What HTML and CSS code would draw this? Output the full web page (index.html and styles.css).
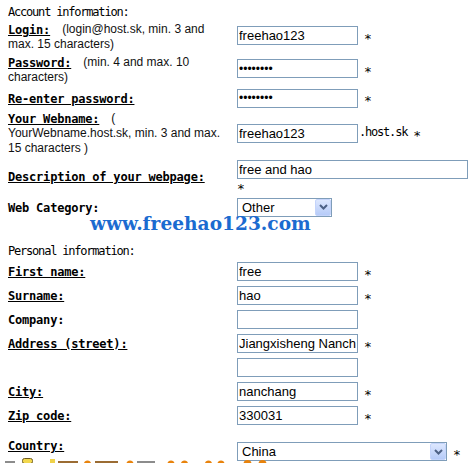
FILE: index.html
```html
<!DOCTYPE html>
<html>
<head>
<meta charset="utf-8">
<title>Registration</title>
<link rel="stylesheet" href="styles.css">
</head>
<body>
<form class="reg">
  <div class="title title-acct">Account information:</div>
  <div class="grid acct">
    <div class="lab"><u class="key">Login:</u><span class="hint">(login@host.sk, min. 3 and max. 15 characters)</span></div>
    <div class="fld up"><input class="txt" type="text" value="freehao123"><span class="req">*</span></div>

    <div class="lab"><u class="key">Password:</u><span class="hint">(min. 4 and max. 10 characters)</span></div>
    <div class="fld up"><input class="txt pw" type="password" value="12345678"><span class="req">*</span></div>

    <div class="lab"><u class="key">Re-enter password:</u></div>
    <div class="fld"><input class="txt pw" type="password" value="12345678"><span class="req">*</span></div>

    <div class="lab"><u class="key">Your Webname:</u><span class="hint">( YourWebname.host.sk, min. 3 and max. 15 characters )</span></div>
    <div class="fld"><input class="txt" type="text" value="freehao123"><span class="suffix">.host.sk <span class="star">*</span></span></div>

    <div class="lab"><u class="key">Description of your webpage:</u></div>
    <div class="fld col"><input class="txt wide" type="text" value="free and hao"><span class="req-line">*</span></div>

    <div class="lab"><b class="key plain">Web Category:</b></div>
    <div class="fld">
      <span class="selwrap cat">
        <select class="sel"><option>Other</option></select>
        <span class="sel-btn"><svg width="9" height="6" viewBox="0 0 9 6"><polyline points="1,1 4.5,4.5 8,1" fill="none" stroke="#4d6185" stroke-width="2"/></svg></span>
      </span>
    </div>
  </div>

  <div class="title title-pers">Personal information:</div>
  <div class="grid pers">
    <div class="lab"><u class="key">First name:</u></div>
    <div class="fld"><input class="txt" type="text" value="free"><span class="req">*</span></div>

    <div class="lab"><u class="key">Surname:</u></div>
    <div class="fld"><input class="txt" type="text" value="hao"><span class="req">*</span></div>

    <div class="lab"><b class="key plain">Company:</b></div>
    <div class="fld"><input class="txt" type="text" value=""></div>

    <div class="lab"><u class="key">Address (street):</u></div>
    <div class="fld"><input class="txt" type="text" value="Jiangxisheng Nanchang"><span class="req">*</span></div>

    <div class="lab"></div>
    <div class="fld"><input class="txt" type="text" value=""></div>

    <div class="lab"><u class="key">City:</u></div>
    <div class="fld"><input class="txt" type="text" value="nanchang"><span class="req">*</span></div>

    <div class="lab"><u class="key">Zip code:</u></div>
    <div class="fld"><input class="txt" type="text" value="330031"><span class="req">*</span></div>

    <div class="lab"><u class="key">Country:</u></div>
    <div class="fld country">
      <span class="selwrap ctry">
        <select class="sel"><option>China</option></select>
        <span class="sel-btn"><svg width="9" height="6" viewBox="0 0 9 6"><polyline points="1,1 4.5,4.5 8,1" fill="none" stroke="#4d6185" stroke-width="2"/></svg></span>
      </span>
      <span class="req">*</span>
    </div>
  </div>
</form>

<div class="watermark">www.freehao123.com</div>

<svg class="deco" width="471" height="8" viewBox="0 0 471 8" aria-hidden="true">
  <rect x="5" y="6" width="10" height="2" fill="#8c8c8c"/>
  <rect x="22.5" y="3.5" width="10" height="5" rx="2" fill="#f2d84e" stroke="#6e5a22"/>
  <rect x="50" y="4" width="5" height="4" fill="#efd24a"/>
  <rect x="58" y="6" width="20" height="2" fill="#9b6c33"/>
  <circle cx="87.5" cy="9" r="3.5" fill="#e8830c"/>
  <rect x="95" y="6" width="23" height="2" fill="#9b6c33"/>
  <circle cx="130" cy="9" r="3.5" fill="#e8830c"/>
  <rect x="137" y="6" width="18" height="2" fill="#8c8c8c"/>
  <circle cx="171" cy="9" r="3.5" fill="#e8830c"/>
  <circle cx="184.5" cy="9" r="3.5" fill="#e8830c"/>
  <circle cx="208.5" cy="9" r="3.5" fill="#e8830c"/>
  <circle cx="221" cy="9" r="3.5" fill="#e8830c"/>
  <circle cx="247.5" cy="9" r="4" fill="#e8830c"/>
  <circle cx="262.5" cy="9" r="4" fill="#e8830c"/>
</svg>
</body>
</html>
```

FILE: styles.css
```css
html, body {
  margin: 0;
  padding: 0;
  overflow: hidden;
  background: #fff;
}

body {
  padding-left: 8px;
  font-family: "DejaVu Sans Mono", "Liberation Mono", monospace;
  font-size: 12px;
  letter-spacing: -1.2px;
  line-height: 15px;
  color: #000;
}

.reg {
  margin: 0;
}

.title {
  line-height: 15px;
}

.title-acct {
  padding-top: 5px;
}

.title-acct + .grid {
  margin-top: 2px;
}

.title-pers {
  margin-top: 27px;
}

.title-pers + .grid {
  margin-top: 2px;
}

.grid {
  display: grid;
  grid-template-columns: 222px 1fr;
  column-gap: 7px;
  row-gap: 3px;
  align-items: center;
}

.lab {
  line-height: 15px;
}

.key {
  font-weight: bold;
  letter-spacing: -0.2px;
  text-decoration: underline;
  line-height: 13px;
  vertical-align: -1px;
}

.key.plain {
  text-decoration: none;
}

.hint {
  font-family: "Liberation Sans", Arial, sans-serif;
  font-size: 12px;
  letter-spacing: 0;
  margin-left: 12px;
  color: #111;
}

.fld {
  display: flex;
  align-items: center;
  min-height: 20px;
}

.pers .fld {
  min-height: 21px;
}

.fld.up {
  padding-bottom: 3px;
}

.fld.col {
  flex-direction: column;
  align-items: flex-start;
}

.fld.country {
  padding-top: 12px;
}

.txt {
  box-sizing: border-box;
  width: 121px;
  height: 19px;
  margin: 0;
  padding: 0 1px;
  border: 1px solid #7f9db9;
  border-radius: 0;
  background: #fff;
  color: #000;
  font-family: "Liberation Sans", Arial, sans-serif;
  font-size: 13px;
  letter-spacing: 0;
  outline: none;
}

.txt.pw {
  font-size: 12px;
}

.txt.wide {
  width: 231px;
  margin-top: 1px;
}

.req {
  margin-left: 6px;
  padding-top: 5px;
  font-size: 13px;
  letter-spacing: 0;
}

.req-line {
  display: block;
  font-size: 13px;
  letter-spacing: 0;
  line-height: 11px;
  padding-top: 4px;
}

.suffix {
  margin-left: 1px;
  white-space: pre;
}

.star {
  font-size: 13px;
  letter-spacing: 0;
  vertical-align: -4px;
}

.selwrap {
  position: relative;
  display: inline-block;
  height: 19px;
}

.selwrap.cat {
  width: 95px;
}

.selwrap.ctry {
  width: 210px;
}

.sel {
  -webkit-appearance: none;
  appearance: none;
  box-sizing: border-box;
  width: 100%;
  height: 19px;
  margin: 0;
  padding: 0 0 0 4px;
  border: 1px solid #7f9db9;
  border-radius: 0;
  background: #fff;
  color: #000;
  font-family: "Liberation Sans", Arial, sans-serif;
  font-size: 13px;
  letter-spacing: 0;
  outline: none;
}

.sel-btn {
  position: absolute;
  right: 1px;
  top: 1px;
  box-sizing: border-box;
  width: 16px;
  height: 17px;
  border: 1px solid #c4d4fb;
  border-radius: 2px;
  background: linear-gradient(#dde7fe, #b6cbf8);
  display: flex;
  align-items: center;
  justify-content: center;
  pointer-events: none;
}

.watermark {
  position: absolute;
  left: 90px;
  top: 215px;
  font-family: "DejaVu Serif", serif;
  font-weight: bold;
  font-size: 18.6px;
  line-height: 18px;
  letter-spacing: 0;
  color: #1b6bd0;
  white-space: nowrap;
}

.deco {
  position: absolute;
  left: 0;
  top: 455px;
  display: block;
}
```
